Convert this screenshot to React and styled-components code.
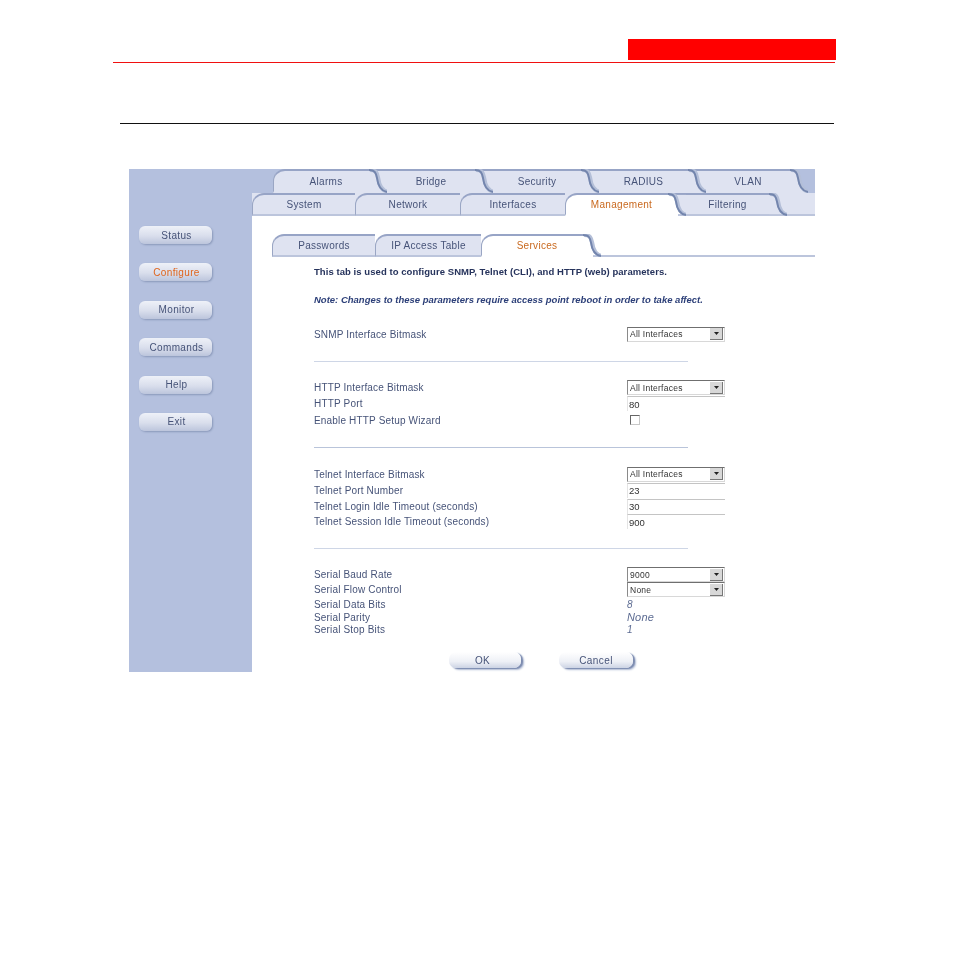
import styled, { createGlobalStyle } from 'styled-components'

const GlobalStyle = createGlobalStyle`
  html, body { margin: 0; padding: 0; background: #fff; }
  body { font-family: "Liberation Sans", Arial, sans-serif; }
  * { box-sizing: border-box; }
`

const INK = '#465378'
const ACTIVE = '#c9691f'
const TAB_BG = '#dfe3f1'
const SIDE_BG = '#b4c0de'
const TAB_LINE = '#bcc5dc'
const TAB_TOP = '#97a4c6'

const Page = styled.div`
  width: 954px;
  height: 954px;
  padding-top: 39px;
  overflow: hidden;
`

const Header = styled.header`
  margin-left: 113px;
  width: 723px;
`

const RedBox = styled.div`
  width: 208px;
  height: 21px;
  margin-left: auto;
  background: #ff0000;
`

const RedLine = styled.div`
  height: 1px;
  margin-top: 2px;
  margin-right: 1px;
  background: #f01010;
`

const BlackLine = styled.div`
  width: 714px;
  height: 1px;
  margin: 60px 0 45px 120px;
  background: #111;
`

const Shot = styled.div`
  display: flex;
  width: 686px;
  height: 503px;
  margin-left: 129px;
  overflow: hidden;
  background: #fff;
  filter: blur(0.35px);
`

const Sidebar = styled.nav`
  display: flex;
  flex-direction: column;
  flex: 0 0 123px;
  gap: 19.4px;
  padding: 57px 0 0 10px;
  background: ${SIDE_BG};
`

const NavButton = styled.div`
  display: flex;
  align-items: center;
  justify-content: center;
  width: 73px;
  height: 18px;
  padding-left: 2px;
  border-radius: 6px;
  background: linear-gradient(#eef1f8, #d9deec 55%, #bcc5dc);
  box-shadow: 1px 1px 2px #8a98ba;
  font-size: 10px;
  letter-spacing: 0.35px;
  color: ${({ $active }) => ($active ? '#e0651c' : INK)};
`

const Main = styled.main`
  flex: 1;
  min-width: 0;
`

const TabRow = styled.div`
  display: flex;
  height: ${({ $h }) => $h}px;
  padding-left: ${({ $inset }) => $inset || 0}px;
  background: ${({ $bg }) => $bg};
`

const Tab = styled.div`
  position: relative;
  z-index: ${({ $z }) => $z};
  flex: 0 0 ${({ $w }) => $w}px;
  display: flex;
  align-items: center;
  justify-content: center;
  background: ${({ $active }) => ($active ? '#fff' : TAB_BG)};
  border-top: 2px solid ${TAB_TOP};
  border-left: ${({ $edge }) => ($edge ? '1px solid #9aa6c4' : '0')};
  border-top-left-radius: ${({ $edge }) => ($edge ? '12px' : '0')};
  border-bottom: 2px solid ${({ $active, $flat }) => ($active ? '#fff' : $flat ? TAB_BG : TAB_LINE)};
  font-size: 10px;
  letter-spacing: 0.3px;
  color: ${({ $active }) => ($active ? ACTIVE : INK)};
`

const TabFill = styled.div`
  flex: 1;
  background: ${({ $bg }) => $bg};
  border-bottom: ${({ $line }) => ($line ? `2px solid ${TAB_LINE}` : '0')};
`

const CurveSvg = styled.svg`
  position: absolute;
  top: -2px;
  right: -9px;
  width: 18px;
  height: calc(100% + 4px);
`

const SoftStroke = styled.path`
  filter: blur(0.5px);
`

const CURVE = 'C6 1 7 4 8 9 C9 17 12 22 18 23'

// topLine: the next tab's top edge carries on behind the curve
const TabCurve = ({ fill, behind, base, topLine, active }) => (
  <CurveSvg viewBox="0 0 18 24" preserveAspectRatio="none">
    <rect x="0" y="0" width="18" height="24" fill={behind} />
    {topLine && <rect x="0" y="0" width="18" height="2" fill={TAB_TOP} />}
    <path d={`M0 1 ${CURVE} L18 24 L0 24 Z`} fill={fill} />
    {base && <rect x={active ? 10 : 0} y="22" width={active ? 8 : 18} height="2" fill={TAB_LINE} />}
    <SoftStroke d={`M0 1 ${CURVE}`} fill="none" stroke="#b4bfd8" strokeWidth="4" transform="translate(1.2 0)" />
    <SoftStroke d={`M0 1 ${CURVE}`} fill="none" stroke="#7385ad" strokeWidth="2" />
  </CurveSvg>
)

const TabItem = ({ label, w, z, active, edge, curve, flat, behind, topLine }) => (
  <Tab $w={w} $z={z} $active={active} $edge={edge} $flat={flat}>
    {label}
    {curve && (
      <TabCurve
        fill={active ? '#fff' : TAB_BG}
        behind={behind}
        base={!flat}
        topLine={topLine}
        active={active}
      />
    )}
  </Tab>
)

const SubTabs = styled(TabRow)`
  margin-top: 18px;
`

const Form = styled.div`
  padding-left: 62px;
  color: ${INK};
`

const Intro = styled.p`
  display: flex;
  align-items: center;
  height: 28px;
  margin: 0 0 ${({ $after }) => $after || 0}px;
  font-size: 9.5px;
  font-weight: bold;
  font-style: ${({ $note }) => ($note ? 'italic' : 'normal')};
  color: ${({ $note }) => ($note ? '#2c3f78' : '#26335c')};
  letter-spacing: ${({ $note }) => ($note ? '0' : '0.06px')};
`

const Row = styled.div`
  display: grid;
  grid-template-columns: 313px 98px;
  align-items: center;
  height: ${({ $h }) => $h}px;
  font-size: 10px;
  letter-spacing: 0.17px;
`

const Divider = styled.div`
  width: 374px;
  height: 1px;
  margin: 19px 0 18px;
  background: ${({ $tone }) => $tone || '#ced6e6'};
`

const Select = styled.div`
  display: flex;
  align-items: center;
  justify-content: space-between;
  height: 15px;
  padding: 0 1px 0 2px;
  background: #fff;
  border-top: 1px solid #6f6f6f;
  border-left: 1px solid #8a8a8a;
  border-right: 1px solid #d8d8d8;
  border-bottom: 1px solid #d8d8d8;
  font-size: 8.5px;
  letter-spacing: 0.25px;
  color: #333;
`

const SelectArrow = styled.span`
  display: flex;
  align-items: center;
  justify-content: center;
  width: 13px;
  height: 12px;
  background: #d8d8d8;
  border-right: 1px solid #777;
  border-bottom: 1px solid #777;
`

const Dropdown = ({ value }) => (
  <Select>
    {value}
    <SelectArrow>
      <svg width="5" height="3" viewBox="0 0 5 3"><path d="M0 0h5L2.5 3z" fill="#222" /></svg>
    </SelectArrow>
  </Select>
)

const TextInput = styled.input`
  width: 100%;
  height: 15px;
  padding: 0 1px;
  background: #fff;
  border: 0;
  border-top: 1px solid #c4c4c4;
  border-left: 1px solid #e4e4e4;
  font-family: inherit;
  font-size: 9.5px;
  color: #333;
  outline: none;
`

const Check = styled.span`
  display: block;
  width: 10px;
  height: 10px;
  margin-left: 3px;
  background: #fff;
  border-top: 1px solid #666;
  border-left: 1px solid #666;
  border-right: 1px solid #c8c8c8;
  border-bottom: 1px solid #c8c8c8;
`

const ReadOnly = styled.span`
  font-style: italic;
  font-size: ${({ $size }) => $size || 10}px;
  color: #5c6b92;
`

const Actions = styled.div`
  display: flex;
  gap: 38px;
  margin-top: 17px;
  padding-left: 135px;
`

const ActionButton = styled.div`
  display: flex;
  align-items: center;
  justify-content: center;
  width: ${({ $w }) => $w}px;
  height: 16px;
  padding-right: ${({ $pad }) => $pad || 0}px;
  border-radius: 7px;
  background: linear-gradient(#fff, #eef0f6 60%, #ccd3e4);
  box-shadow: 2px 1px 1px #7d8cb0, 3px 2px 2px #b6c0d8;
  font-size: 10px;
  letter-spacing: 0.4px;
  color: ${INK};
`

const navItems = ['Status', 'Configure', 'Monitor', 'Commands', 'Help', 'Exit']

const topTabs = [
  ['Alarms', 105],
  ['Bridge', 106],
  ['Security', 106],
  ['RADIUS', 107],
  ['VLAN', 102],
]

const midTabs = [
  ['System', 103, false],
  ['Network', 105, false],
  ['Interfaces', 105, false],
  ['Management', 112, true],
  ['Filtering', 101, true],
]

export default function App() {
  return (
    <Page>
      <GlobalStyle />
      <Header>
        <RedBox />
        <RedLine />
      </Header>
      <BlackLine />
      <Shot>
        <Sidebar>
          {navItems.map((item) => (
            <NavButton key={item} $active={item === 'Configure'}>{item}</NavButton>
          ))}
        </Sidebar>
        <Main>
          <TabRow $h={24} $inset={21} $bg={SIDE_BG}>
            {topTabs.map(([label, w], i) => {
              const last = i === topTabs.length - 1
              return (
                <TabItem
                  key={label}
                  label={label}
                  w={w}
                  z={10 - i}
                  edge={i === 0}
                  curve
                  flat
                  behind={last ? SIDE_BG : TAB_BG}
                  topLine={!last}
                />
              )
            })}
          </TabRow>
          <TabRow $h={23} $bg={TAB_BG}>
            {midTabs.map(([label, w, curve], i) => (
              <TabItem
                key={label}
                label={label}
                w={w}
                z={i < 3 ? i + 1 : 10 - i}
                active={label === 'Management'}
                edge={i < 4}
                curve={curve}
                behind={TAB_BG}
                topLine={label === 'Management'}
              />
            ))}
            <TabFill $bg={TAB_BG} $line />
          </TabRow>
          <SubTabs $h={23} $inset={20} $bg="#fff">
            <TabItem label="Passwords" w={103} z={1} edge />
            <TabItem label="IP Access Table" w={106} z={2} edge />
            <TabItem label="Services" w={111} z={3} edge active curve behind="#fff" />
            <TabFill $bg="#fff" $line />
          </SubTabs>
          <Form>
            <Intro>This tab is used to configure SNMP, Telnet (CLI), and HTTP (web) parameters.</Intro>
            <Intro $note $after={13}>Note: Changes to these parameters require access point reboot in order to take affect.</Intro>
            <Row $h={16}>SNMP Interface Bitmask<Dropdown value="All Interfaces" /></Row>
            <Divider />
            <Row $h={15}>HTTP Interface Bitmask<Dropdown value="All Interfaces" /></Row>
            <Row $h={17}>HTTP Port<TextInput defaultValue="80" /></Row>
            <Row $h={16}>Enable HTTP Setup Wizard<Check /></Row>
            <Divider $tone="#b9c4da" />
            <Row $h={16}>Telnet Interface Bitmask<Dropdown value="All Interfaces" /></Row>
            <Row $h={16}>Telnet Port Number<TextInput defaultValue="23" /></Row>
            <Row $h={16}>Telnet Login Idle Timeout (seconds)<TextInput defaultValue="30" /></Row>
            <Row $h={15}>Telnet Session Idle Timeout (seconds)<TextInput defaultValue="900" /></Row>
            <Divider />
            <Row $h={15}>Serial Baud Rate<Dropdown value="9000" /></Row>
            <Row $h={15}>Serial Flow Control<Dropdown value="None" /></Row>
            <Row $h={14}>Serial Data Bits<ReadOnly>8</ReadOnly></Row>
            <Row $h={12}>Serial Parity<ReadOnly $size={11}>None</ReadOnly></Row>
            <Row $h={12}>Serial Stop Bits<ReadOnly>1</ReadOnly></Row>
            <Actions>
              <ActionButton $w={72} $pad={5}>OK</ActionButton>
              <ActionButton $w={74}>Cancel</ActionButton>
            </Actions>
          </Form>
        </Main>
      </Shot>
    </Page>
  )
}
